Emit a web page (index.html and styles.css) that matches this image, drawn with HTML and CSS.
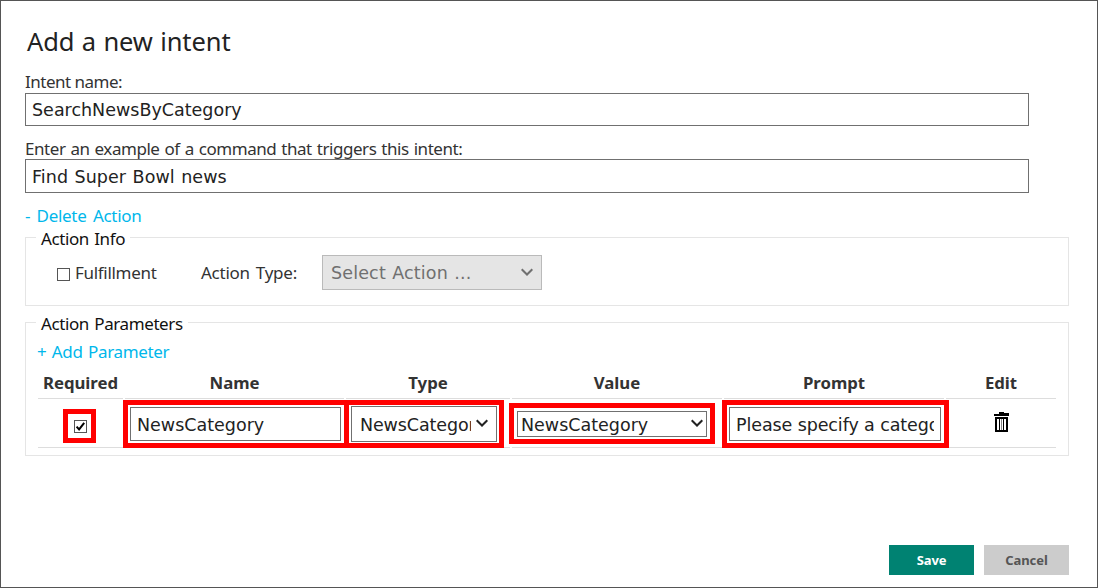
FILE: index.html
```html
<!DOCTYPE html>
<html lang="en">
<head>
<meta charset="utf-8">
<title>Add a new intent</title>
<link rel="stylesheet" href="styles.css">
</head>
<body>
<main class="dialog">
  <h1 class="title">Add a new intent</h1>
  <div class="label label-name">Intent name:</div>
  <div class="field field-name">SearchNewsByCategory</div>
  <div class="label label-example">Enter an example of a command that triggers this intent:</div>
  <div class="field field-example">Find Super Bowl news</div>
  <a class="link delete">- Delete Action</a>

  <section class="group info">
    <div class="legend">Action Info</div>
    <div class="info-row">
      <span class="check"></span>
      <span class="fulfillment">Fulfillment</span>
      <span class="action-type">Action Type:</span>
      <div class="select disabled"><span>Select Action ...</span>
        <svg class="chevron" viewBox="0 0 12 9"><path d="M.7 1.2 6 6.5 11.3 1.2"/></svg>
      </div>
    </div>
  </section>

  <section class="group params">
    <div class="legend">Action Parameters</div>
    <a class="link add">+ Add Parameter</a>
    <div class="table">
      <div class="th">Required</div>
      <div class="th">Name</div>
      <div class="th">Type</div>
      <div class="th">Value</div>
      <div class="th">Prompt</div>
      <div class="th">Edit</div>

      <div class="td td-required"><span class="check mark marked"><svg viewBox="0 0 11 11"><path d="M1.6 5.6 4.1 8.4 9.2 1.8"/></svg></span></div>
      <div class="td td-name"><div class="cell-field mark"><span class="clip">NewsCategory</span></div></div>
      <div class="td td-type"><div class="cell-field mark"><span class="clip">NewsCategory</span><svg class="chevron" viewBox="0 0 12 9"><path d="M.7 1.2 6 6.5 11.3 1.2"/></svg></div></div>
      <div class="td td-value"><div class="cell-field mark"><span class="clip">NewsCategory</span><svg class="chevron" viewBox="0 0 12 9"><path d="M.7 1.2 6 6.5 11.3 1.2"/></svg></div></div>
      <div class="td td-prompt"><div class="cell-field mark"><span class="clip">Please specify a category</span></div></div>
      <div class="td td-edit"><svg class="trash" viewBox="0 0 15 20"><path d="M5 0h5v1h5v3H0V2h5z"/><path fill-rule="evenodd" d="M1 5h13v15H1zM3 7v11h2V7zM6 7v11h3V7zM10 7v11h2V7z"/><path class="rib" d="M7 7h1v11H7z"/></svg></div>
    </div>
  </section>

  <footer class="actions">
    <button class="btn save">Save</button>
    <button class="btn cancel">Cancel</button>
  </footer>
</main>
</body>
</html>
```
FILE: styles.css
```css
* { box-sizing: border-box; }
body { margin: 0; background: #fff; color: #333; font: 17px/24px "Noto Sans", sans-serif; }
.dialog { display: flex; flex-direction: column; width: 1098px; height: 588px; padding: 0 28px 12px 24px; border: 1px solid #555; overflow: hidden; white-space: nowrap; }
.title { margin: 22px 0 0 2px; height: 36px; font-size: 25.5px; line-height: 36px; font-weight: 400; color: #222; letter-spacing: -.1px; word-spacing: .9px; }
.label { letter-spacing: -.45px; height: 22px; line-height: 22px; }
.label-name { margin-top: 12px; letter-spacing: -.5px; }
.label-example { margin-top: 12px; height: 21px; word-spacing: 1px; }
.field { display: flex; align-items: center; width: 1004px; height: 33px; padding-left: 6px; border: 1px solid #707070; background: #fff; color: #222; font: 17.5px/24px "DejaVu Sans", sans-serif; }
.field-example { height: 34px; padding-top: 1px; word-spacing: .9px; letter-spacing: .05px; }
.link { color: #00b7eb; letter-spacing: -.3px; word-spacing: 2.3px; }
.delete { margin-top: 11px; height: 24px; }
.group { width: 1044px; border: 1px solid #e5e5e5; padding-left: 12px; }
.info { margin-top: 9px; height: 69px; }
.params { margin-top: 16px; height: 134px; }
.legend { width: max-content; height: 22px; margin: -11px 0 0 -2px; padding: 0 5px; line-height: 24px; background: #fff; color: #111; letter-spacing: -.4px; word-spacing: 1.3px; }
.info-row { display: flex; align-items: center; height: 36px; margin: 6px 0 0 19px; }
.check { position: relative; display: block; width: 13px; height: 13px; border: 1px solid #555; background: #fff; margin-top: 3px; }
.fulfillment { width: 126px; margin-left: 5px; letter-spacing: -.3px; }
.action-type { width: 121px; letter-spacing: -.25px; word-spacing: 1.8px; }
.select { display: flex; align-items: center; justify-content: space-between; width: 220px; height: 35px; margin-bottom: 1px; padding: 1px 8px 0; border: 1px solid #bababa; background: #e5e5e5; color: #707070; font: 17.5px/24px "DejaVu Sans", sans-serif; letter-spacing: .15px; word-spacing: .6px; }
.chevron { flex: none; width: 12px; height: 9px; fill: none; stroke: #222; stroke-width: 2; }
.disabled .chevron { stroke: #707070; margin-bottom: 2px; }
.add { display: block; height: 24px; margin: 6px 0 0 -1px; letter-spacing: -.35px; word-spacing: 1.4px; }
.table { display: grid; grid-template-columns: 85px 219px 164px 210px 220px 110px; grid-template-rows: 35px 49px; column-gap: 2px; }
.th { display: flex; justify-content: center; border-bottom: 1px solid #ddd; font-weight: 700; font-size: 16.8px; line-height: 37px; letter-spacing: -.05px; }
.td { display: flex; border-bottom: 1px solid #ddd; }
.mark { position: relative; }
.mark::after { content: ""; position: absolute; border: 5px solid #f00; pointer-events: none; z-index: 1; }
.td-required { padding: 18px 0 0 36px; }
.marked::after { inset: -12px -10px -11px -12px; }
.marked svg { display: block; width: 11px; height: 11px; fill: none; stroke: #000; stroke-width: 2; }
.cell-field { display: flex; align-items: center; border: 1px solid #707070; background: #fff; color: #222; font: 17.5px/24px "DejaVu Sans", sans-serif; }
.cell-field .chevron { margin-bottom: 2px; }
.clip { overflow: hidden; padding-top: 1px; }
.td-name { padding: 8px 0 0 5px; }
.td-name .cell-field { width: 211px; height: 34px; padding: 0 6px; }
.td-name .mark::after { inset: -8px -9px -8px -8px; }
.td-type { padding: 7px 0 0 5px; }
.td-type .cell-field { width: 146px; height: 36px; padding: 0 8px; justify-content: space-between; }
.td-type .clip { width: 111px; letter-spacing: -.12px; }
.td-type .mark::after { inset: -7px -8px -7px -8px; }
.td-value { padding: 12px 0 0 5px; }
.td-value .cell-field { width: 190px; height: 26px; padding: 0 3px; justify-content: space-between; }
.td-value .mark::after { inset: -9px -9px -8px -9px; }
.td-prompt { padding: 8px 0 0 5px; }
.td-prompt .cell-field { width: 212px; height: 34px; padding: 0 6px; }
.td-prompt .clip { letter-spacing: -.1px; }
.td-prompt .mark::after { inset: -8px -9px -8px -8px; }
.td-edit { padding: 13px 0 0 48px; }
.trash { width: 15px; height: 20px; fill: #000; }
.rib { fill: #888; }
.actions { display: flex; justify-content: flex-end; gap: 10px; margin-top: auto; }
.btn { width: 85px; height: 30px; padding: 0; border: 0; font: 700 13px/30px "Noto Sans", sans-serif; letter-spacing: -.1px; }
.save { background: #008272; color: #fff; }
.cancel { background: #ccc; color: #555; }
```
